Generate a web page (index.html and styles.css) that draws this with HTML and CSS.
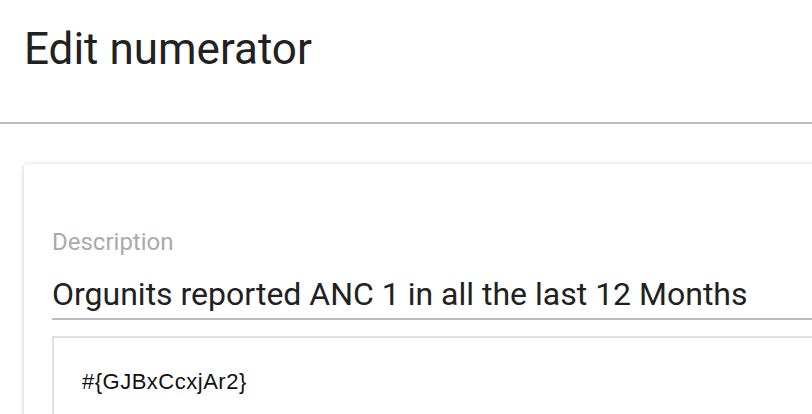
FILE: index.html
```html
<!DOCTYPE html>
<html>
<head>
<meta charset="utf-8">
<link rel="stylesheet" href="styles.css">
</head>
<body>
<div class="page">
  <header class="header">
    <h1 class="title">Edit numerator</h1>
  </header>
  <section class="card">
    <div class="field">
      <label class="field-label">Description</label>
      <div class="field-input">Orgunits reported ANC 1 in all the last 12 Months</div>
    </div>
    <div class="formula">
      <div class="formula-text">#{GJBxCcxjAr2}</div>
    </div>
  </section>
</div>
</body>
</html>
```

FILE: styles.css
```css
html, body {
  margin: 0;
  padding: 0;
  background: #ffffff;
  overflow: hidden;
}

.page {
  width: 812px;
  height: 414px;
  overflow: hidden;
  font-family: Roboto, "Noto Sans", sans-serif;
}

.header {
  height: 124px;
  box-sizing: border-box;
  padding: 23px 0 0 24px;
  border-bottom: 2px solid #bdbdbd;
}

.title {
  margin: 0;
  font-size: 44px;
  line-height: 52px;
  font-weight: 400;
  color: #212121;
}

.card {
  margin: 40px 0 0 24px;
  width: 1000px;
  background: #ffffff;
  border-radius: 3px;
  box-shadow: 0 1px 6px rgba(0, 0, 0, 0.12), 0 1px 4px rgba(0, 0, 0, 0.12);
  padding: 64px 0 60px 28px;
}

.field {
  display: flex;
  flex-direction: column;
}

.field-label {
  font-size: 24px;
  line-height: 28px;
  color: #aaaaaa;
}

.field-input {
  margin-top: 18px;
  font-size: 32px;
  line-height: 40px;
  color: #212121;
  padding-bottom: 4px;
  border-bottom: 2px solid #bdbdbd;
}

.formula {
  margin-top: 16px;
  border: 2px solid #e0e0e0;
  padding: 32px 0 40px 28px;
}

.formula-text {
  font-family: "Liberation Sans", Arial, sans-serif;
  font-size: 22px;
  line-height: 24px;
  letter-spacing: 0.5px;
  color: #111111;
}
```
